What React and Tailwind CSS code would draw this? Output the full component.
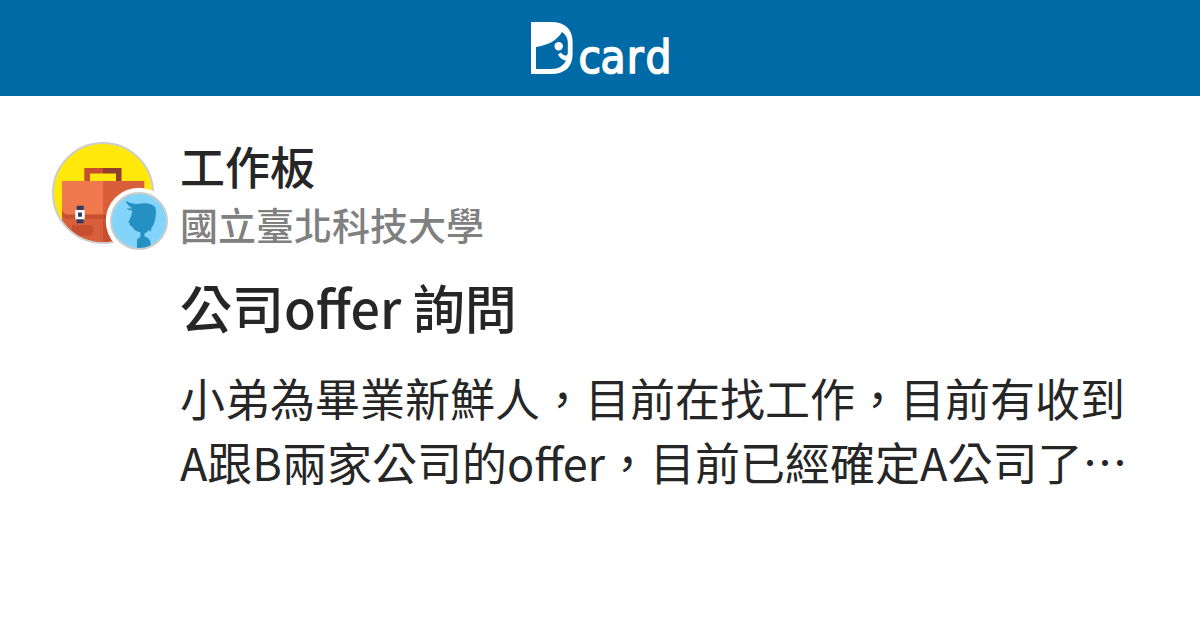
function Logo() {
  return (
    <svg className="overflow-visible" width="140" height="54" viewBox="530 21 140 54" role="img" aria-label="Dcard">
      <path
        fill="#fff"
        fillRule="evenodd"
        d="M531 22H551C565 22 572.6 29 572.6 42V54C572.6 67 565 74 551 74H531Z M536 47C548 45 556.5 41 562 32Q567.8 36 567.8 43V52Q567.8 53.500 567.300 54.900Q565.500 56 563.500 55L560.700 52.500L558 54.800Q561 59.700 566 60.800Q562 69 551 69H536Z"
      />
      <circle cx="558.7" cy="46.3" r="4.2" fill="#fff" />
      <text
        transform="scale(0.88 1)"
        x="657.3 682.5 712.3 733.6"
        y="72.800"
        fill="#fff"
        stroke="#fff"
        strokeWidth="1.7"
        fontSize="46.500"
        className="font-['DejaVu_Sans',sans-serif]"
      >
        card
      </text>
    </svg>
  );
}

function Avatar() {
  return (
    <svg width="118" height="110" viewBox="51 141 118 110" aria-hidden="true">
      <defs>
        <clipPath id="board">
          <circle cx="103" cy="193" r="49.5" />
        </clipPath>
        <clipPath id="member">
          <circle cx="139" cy="221" r="27.5" />
        </clipPath>
      </defs>
      <g clipPath="url(#board)">
        <path fill="#ffe80a" d="M50 140h106v106H50z" />
        <path fill="#c84e30" d="M84.3 168H103v5.5H90V182h-5.7z" />
        <path fill="#8f3f2b" d="M103 168h18.5v14H116v-8.500H103z" />
        <path fill="#d95f3b" d="M62 181h82.300v66H62z" />
        <path fill="#c65030" d="M62 208h41v11H68q-6 0-6-6z" />
        <path fill="#ef794c" d="M62 181h41v33.500H68q-6 0-6-6z" />
        <path fill="#be4a2c" d="M103 214.500h42v4.500h-42z" />
        <path fill="#c84e30" d="M103 219h42v28h-42z" />
        <path fill="#c84e30" d="M72 225h21v5q0 6-6 6h-9q-6 0-6-6z" />
        <path fill="#2f3c63" d="M76.700 205.700h7v17.500h-7z" />
        <path fill="#fff" d="M75.300 210h9.400v9.300h-9.400z" />
        <path fill="#2f3c63" d="M78 212.500h4v4.200h-4z" />
      </g>
      <circle cx="103" cy="193" r="50" fill="none" stroke="#ccc" strokeWidth="2" />
      <circle cx="139" cy="221" r="33.300" fill="#fff" />
      <circle cx="139" cy="221" r="28" fill="#82d4fb" />
      <path
        clipPath="url(#member)"
        fill="#2590c2"
        d="M125.700 200.700Q130 203.800 136 204Q141 203.200 147 203.300Q152 204 155.200 207Q156.400 211 155.600 217Q154.500 224 151.500 228L150.500 232L149 230Q146.500 232.500 144.500 233.500V236.500Q150.700 238 150.700 244V250H137V239.500L140.500 236.500V232.500Q134 231 131.500 226L129.500 225.500L130 223.500L128.300 222.500L130 218.500L131.500 215L132.300 210.800Q129 210.500 126.500 208.500L132.300 208.300Q127.500 206 125.700 200.700Z"
      />
      <circle cx="139" cy="221" r="28" fill="none" stroke="#ccc" strokeWidth="2" />
    </svg>
  );
}

export default function App() {
  return (
    <div className="flex h-[630px] w-[1200px] flex-col overflow-hidden bg-white font-['Noto_Sans_CJK_TC',sans-serif] text-[#262626]">
      <header className="flex h-24 shrink-0 items-center justify-center bg-[#006aa6]">
        <Logo />
      </header>
      <main className="flex pl-[51px] pt-[45px]">
        <div className="w-[129px] shrink-0">
          <Avatar />
        </div>
        <article className="-mt-[2px] w-[960px]">
          <div className="text-[45px] font-medium leading-[54px]">工作板</div>
          <div className="mt-[3px] text-[38px] font-medium leading-[56px] text-[#808080]">國立臺北科技大學</div>
          <h1 className="mt-[19px] text-[52px] font-medium leading-[72px]">公司offer 詢問</h1>
          <p className="mt-[23px] whitespace-nowrap text-[45px] leading-[64px]">
            小弟為畢業新鮮人，目前在找工作，目前有收到
            <br />
            A跟B兩家公司的offer，目前已經確定A公司了…
          </p>
        </article>
      </main>
    </div>
  );
}
